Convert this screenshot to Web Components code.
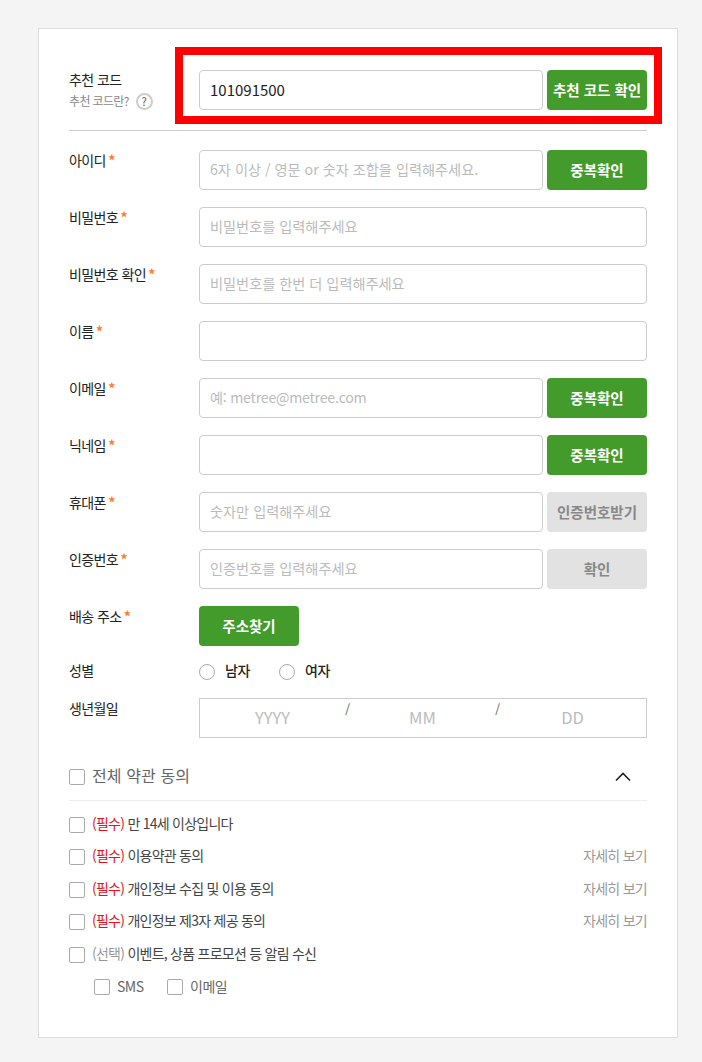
<!DOCTYPE html>
<html lang="ko">
<head>
<meta charset="utf-8">
<title>회원가입</title>
<style>
  html, body { margin: 0; background: #f4f4f4; }
  body { font-family: "Noto Sans CJK KR", "Noto Sans", sans-serif; font-size: 14px; color: #222; }
</style>
</head>
<body>
<signup-page>
  <form-row label="추천 코드" class="recommend">
    <help-hint slot="note">추천 코드란?</help-hint>
    <text-field value="101091500"></text-field>
    <action-button wide>추천 코드 확인</action-button>
  </form-row>
  <form-row label="아이디" required>
    <text-field placeholder="6자 이상 / 영문 or 숫자 조합을 입력해주세요."></text-field>
    <action-button>중복확인</action-button>
  </form-row>
  <form-row label="비밀번호" required><text-field placeholder="비밀번호를 입력해주세요"></text-field></form-row>
  <form-row label="비밀번호 확인" required><text-field placeholder="비밀번호를 한번 더 입력해주세요"></text-field></form-row>
  <form-row label="이름" required><text-field></text-field></form-row>
  <form-row label="이메일" required>
    <text-field tight placeholder="예: metree@metree.com"></text-field>
    <action-button>중복확인</action-button>
  </form-row>
  <form-row label="닉네임" required>
    <text-field></text-field>
    <action-button>중복확인</action-button>
  </form-row>
  <form-row label="휴대폰" required>
    <text-field placeholder="숫자만 입력해주세요"></text-field>
    <action-button disabled>인증번호받기</action-button>
  </form-row>
  <form-row label="인증번호" required>
    <text-field placeholder="인증번호를 입력해주세요"></text-field>
    <action-button disabled>확인</action-button>
  </form-row>
  <form-row label="배송 주소" required><action-button>주소찾기</action-button></form-row>
  <gender-row></gender-row>
  <form-row label="생년월일"><birth-field></birth-field></form-row>
  <terms-list></terms-list>
</signup-page>

<script>
class SignupPage extends HTMLElement {
  constructor() {
    super();
    this.attachShadow({mode: 'open'}).innerHTML = `
      <style>
        :host { display: block; padding: 28px 24px 24px 38px; }
        .card {
          position: relative;
          box-sizing: border-box;
          width: 640px;
          height: 1010px;
          padding: 41px 30px 0;
          background: #fff;
          border: 1px solid #ddd;
          display: flex;
          flex-direction: column;
          gap: 17px;
        }
        .mark {
          position: absolute;
          left: 136px;
          top: 18px;
          width: 487px;
          height: 77px;
          box-sizing: border-box;
          border: 8px solid #f00;
          pointer-events: none;
        }
      </style>
      <div class="card"><slot></slot><div class="mark"></div></div>`;
  }
}

class FormRow extends HTMLElement {
  constructor() {
    super();
    this.attachShadow({mode: 'open'}).innerHTML = `
      <style>
        :host { display: flex; align-items: flex-start; }
        :host(.recommend) { padding-bottom: 20px; margin-bottom: 2px; border-bottom: 1px solid #ccc; }
        :host(.recommend) .head { margin-top: -1px; }
        .head { width: 130px; flex: none; line-height: 20px; }
        .name { display: block; color: #222; letter-spacing: -.6px; }
        .star { color: #ff7a2b; font-weight: 700; margin-left: -1px; letter-spacing: 0; }
        .body { flex: 1; display: flex; gap: 4px; }
      </style>
      <div class="head">
        <span class="name"></span>
        <slot name="note"></slot>
      </div>
      <div class="body"><slot></slot></div>`;
    const name = this.shadowRoot.querySelector('.name');
    name.textContent = this.getAttribute('label');
    if (this.hasAttribute('required')) {
      name.insertAdjacentHTML('beforeend', ' <span class="star">*</span>');
    }
  }
}

class HelpHint extends HTMLElement {
  constructor() {
    super();
    this.attachShadow({mode: 'open'}).innerHTML = `
      <style>
        :host { display: flex; align-items: center; gap: 7px; margin-top: 3px; font-size: 12px; color: #888; letter-spacing: -.65px; line-height: 18px; }
        i {
          width: 17px; height: 17px; box-sizing: border-box;
          border: 2px solid #ccc; border-radius: 50%;
          display: flex; align-items: center; justify-content: center;
          font-style: normal; font-size: 11px; color: #555; letter-spacing: 0;
        }
      </style>
      <slot></slot><i>?</i>`;
  }
}

class TextField extends HTMLElement {
  constructor() {
    super();
    this.attachShadow({mode: 'open'}).innerHTML = `
      <style>
        :host {
          flex: 1; display: flex; align-items: center; box-sizing: border-box;
          height: 40px; padding: 0 10px; background: #fff;
          border: 1px solid #ccc; border-radius: 4px;
          font-size: 15px; color: #222; white-space: nowrap;
        }
        span { padding-bottom: 2px; }
        .empty { color: #bbb; font-size: 14.2px; }
        :host([tight]) .empty { letter-spacing: -.25px; }
      </style>
      <span></span>`;
    const text = this.shadowRoot.querySelector('span');
    if (this.hasAttribute('value')) {
      text.textContent = this.getAttribute('value');
    } else {
      text.textContent = this.getAttribute('placeholder') || '';
      text.className = 'empty';
    }
  }
}

class ActionButton extends HTMLElement {
  constructor() {
    super();
    this.attachShadow({mode: 'open'}).innerHTML = `
      <style>
        :host {
          flex: none; width: 100px; height: 40px; box-sizing: border-box; padding-bottom: 2px; display: flex;
          align-items: center; justify-content: center;
          background: #429b2b; color: #fff; border-radius: 4px;
          font-size: 14.5px; font-weight: 700; white-space: nowrap;
        }
        :host([disabled]) { background: #e2e2e2; color: #888; }
      </style>
      <slot></slot>`;
  }
}

class GenderRow extends HTMLElement {
  constructor() {
    super();
    this.attachShadow({mode: 'open'}).innerHTML = `
      <style>
        :host { display: flex; align-items: center; height: 24px; margin: -3px 0; }
        .name { width: 130px; color: #222; letter-spacing: -.6px; padding-bottom: 4px; }
        label { display: flex; align-items: center; gap: 10px; width: 80px; font-weight: 500; color: #222; letter-spacing: -.3px; }
        label span { padding-bottom: 4px; }
        i { width: 16px; height: 16px; box-sizing: border-box; border: 1px solid #aaa; border-radius: 50%; }
      </style>
      <span class="name">성별</span>
      <label><i></i><span>남자</span></label>
      <label><i></i><span>여자</span></label>`;
  }
}

class BirthField extends HTMLElement {
  constructor() {
    super();
    this.attachShadow({mode: 'open'}).innerHTML = `
      <style>
        :host {
          flex: 1; height: 40px; box-sizing: border-box; border: 1px solid #ccc;
          display: grid; grid-template-columns: 145px 5px 145px 5px 145px;
          align-items: center; text-align: center; color: #bbb; font-size: 16.5px;
        }
        span { padding-bottom: 2px; }
        b { font-weight: 400; color: #555; align-self: start; line-height: 20px; font-size: 12px; }
      </style>
      <span>YYYY</span><b>/</b><span>MM</span><b>/</b><span>DD</span>`;
  }
}

class CheckItem extends HTMLElement {
  constructor() {
    super();
    this.attachShadow({mode: 'open'}).innerHTML = `
      <style>
        :host { display: flex; align-items: center; gap: 7px; height: 16px; letter-spacing: -.75px; color: #444; white-space: nowrap; }
        i { flex: none; width: 16px; height: 16px; box-sizing: border-box; border: 1px solid #aaa; border-radius: 2px; }
        span { padding-bottom: var(--lift, 4px); }
      </style>
      <i></i><span><slot></slot></span>`;
  }
}

class TermsList extends HTMLElement {
  constructor() {
    super();
    const required = ['만 14세 이상입니다', '이용약관 동의', '개인정보 수집 및 이용 동의', '개인정보 제3자 제공 동의'];
    const rows = required.map((text, i) => `
      <div class="row">
        <check-item><em class="must">(필수)</em> ${text}</check-item>
        ${i > 0 ? '<a>자세히 보기</a>' : ''}
      </div>`).join('');
    this.attachShadow({mode: 'open'}).innerHTML = `
      <style>
        :host { display: block; margin-top: -1px; }
        .all { display: flex; align-items: center; justify-content: space-between; height: 47px; box-sizing: border-box; border-bottom: 1px solid #eee; }
        .all check-item { font-size: 16px; color: #666; letter-spacing: .1px; }
        .all svg { margin-right: 16px; }
        .rows { margin-top: 16px; display: grid; grid-auto-rows: 32.4px; }
        .row { display: flex; justify-content: space-between; height: 16px; }
        a { color: #999; letter-spacing: -.73px; line-height: 12px; }
        em { font-style: normal; }
        .must { color: #e0141e; }
        .opt { color: #999; }
        .sub { display: flex; padding-left: 25px; --lift: 2px; }
        .sub check-item { color: #666; width: 73px; letter-spacing: -.5px; }
      </style>
      <div class="all">
        <check-item>전체 약관 동의</check-item>
        <svg width="16" height="12" viewBox="0 0 16 12" fill="none" stroke="#222" stroke-width="1.6"><path d="M1 9.5 8 2.5l7 7"/></svg>
      </div>
      <div class="rows">
        ${rows}
        <div class="row"><check-item><em class="opt">(선택)</em> 이벤트, 상품 프로모션 등 알림 수신</check-item></div>
        <div class="sub"><check-item>SMS</check-item><check-item>이메일</check-item></div>
      </div>`;
  }
}

customElements.define('signup-page', SignupPage);
customElements.define('form-row', FormRow);
customElements.define('help-hint', HelpHint);
customElements.define('text-field', TextField);
customElements.define('action-button', ActionButton);
customElements.define('gender-row', GenderRow);
customElements.define('birth-field', BirthField);
customElements.define('check-item', CheckItem);
customElements.define('terms-list', TermsList);
</script>
</body>
</html>
